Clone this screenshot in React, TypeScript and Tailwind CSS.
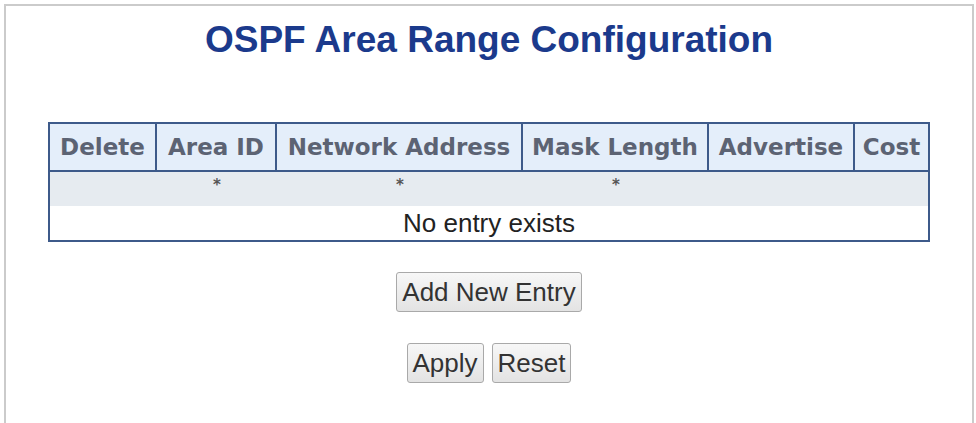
import React from "react";

const cols = [
  { label: "Delete", w: "w-[107px]", star: false, border: true },
  { label: "Area ID", w: "w-[120px]", star: true, border: true },
  { label: "Network Address", w: "w-[246px]", star: true, border: true },
  { label: "Mask Length", w: "w-[186px]", star: true, border: true },
  { label: "Advertise", w: "w-[146px]", star: false, border: true },
  { label: "Cost", w: "w-[73px]", star: false, border: false },
];

function Btn({ children, className = "" }: { children: React.ReactNode; className?: string }) {
  return (
    <button
      className={`h-[40px] px-[5px] border border-[#a9a9a9] rounded-[3px] bg-gradient-to-b from-[#f7f7f7] to-[#e3e3e3] text-[#333] text-[26px] leading-[30px] ${className}`}
      style={{ fontFamily: '"Liberation Sans", Arial, sans-serif' }}
    >
      {children}
    </button>
  );
}

export default function App() {
  return (
    <div className="w-[976px] h-[423px] bg-white overflow-hidden pt-[4px] pl-[4px]">
      <div className="w-[970px] h-[421px] border-2 border-[#cbcbcb] flex flex-col items-center">
        <h1
          className="mt-[14px] text-[37px] leading-[40px] font-bold text-[#1b3a8c]"
          style={{ fontFamily: '"Liberation Sans", Arial, sans-serif' }}
        >
          OSPF Area Range Configuration
        </h1>
        <div className="mt-[62px] w-[882px] border-2 border-[#3d5a8a]">
          <div className="flex h-[48px] bg-[#e4eefa] border-b-2 border-[#3d5a8a]">
            {cols.map((c) => (
              <div
                key={c.label}
                className={`${c.w} ${c.border ? "border-r-2 border-[#3d5a8a]" : ""} flex items-center justify-center text-[23px] font-bold text-[#5c6373] whitespace-nowrap`}
                style={{ fontFamily: '"DejaVu Sans", Verdana, sans-serif' }}
              >
                {c.label}
              </div>
            ))}
          </div>
          <div className="flex h-[34px] bg-[#e6ebf0]">
            {cols.map((c) => (
              <div
                key={c.label}
                className={`${c.w} flex justify-center pt-[6px] text-[15px] leading-[15px] font-bold text-[#555]`}
                style={{ fontFamily: '"DejaVu Sans", Verdana, sans-serif' }}
              >
                {c.star ? "*" : ""}
              </div>
            ))}
          </div>
          <div
            className="h-[34px] bg-white flex items-center justify-center text-[26px] text-[#222]"
            style={{ fontFamily: '"Liberation Sans", Arial, sans-serif' }}
          >
            No entry exists
          </div>
        </div>
        <Btn className="mt-[30px]">Add New Entry</Btn>
        <div className="mt-[31px] flex gap-[8px]">
          <Btn>Apply</Btn>
          <Btn>Reset</Btn>
        </div>
      </div>
    </div>
  );
}
